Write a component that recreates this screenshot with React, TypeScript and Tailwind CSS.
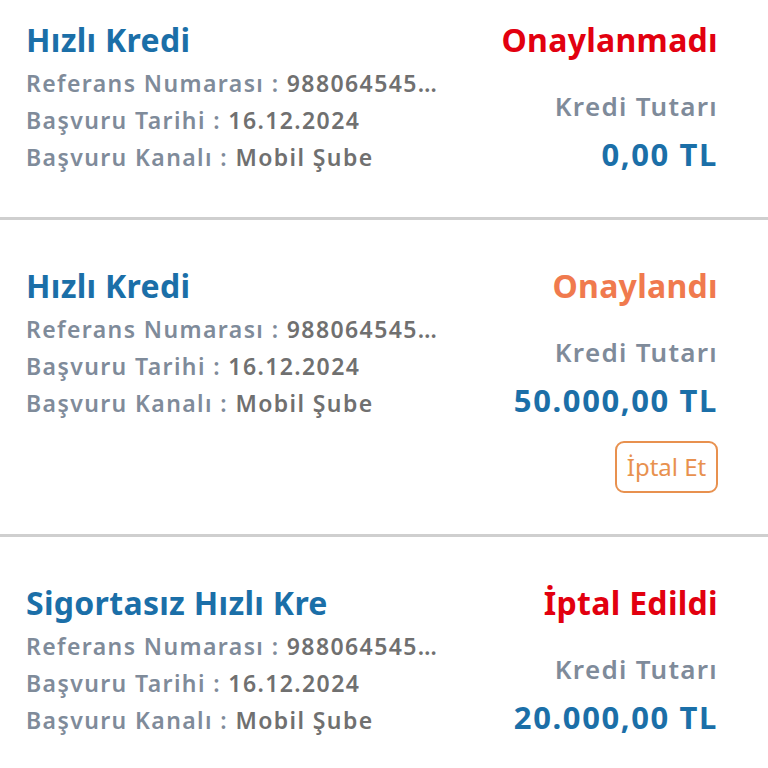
import React from "react";

type Item = {
  title: string;
  status: string;
  statusColor: string;
  amount: string;
  cancel?: boolean;
  first?: boolean;
};

const items: Item[] = [
  { title: "Hızlı Kredi", status: "Onaylanmadı", statusColor: "text-[#e2000f]", amount: "0,00 TL", first: true },
  { title: "Hızlı Kredi", status: "Onaylandı", statusColor: "text-[#f07a4e]", amount: "50.000,00 TL", cancel: true },
  { title: "Sigortasız Hızlı Kre", status: "İptal Edildi", statusColor: "text-[#e2000f]", amount: "20.000,00 TL" },
];

function Card({ item }: { item: Item }) {
  return (
    <div
      className={
        "flex justify-between pl-[26px] pr-[50px] pb-[41px] " +
        (item.first ? "pt-[22px]" : "pt-[48px]")
      }
    >
      <div className="flex flex-col">
        <div className="text-[32px] leading-[36px] font-bold tracking-[0.3px] text-[#1b6fa8] whitespace-nowrap">{item.title}</div>
        <div className="mt-[7px] flex flex-col text-[23px] leading-[37px] font-semibold tracking-[1.4px] whitespace-nowrap">
          <div>
            <span className="text-[#7f8b9a]">Referans Numarası : </span>
            <span className="text-[#707070]">988064545…</span>
          </div>
          <div>
            <span className="text-[#7f8b9a]">Başvuru Tarihi : </span>
            <span className="text-[#707070]">16.12.2024</span>
          </div>
          <div>
            <span className="text-[#7f8b9a]">Başvuru Kanalı : </span>
            <span className="text-[#707070]">Mobil Şube</span>
          </div>
        </div>
      </div>
      <div className="flex flex-col items-end">
        <div className={"text-[32px] leading-[36px] font-bold tracking-[0.3px] whitespace-nowrap " + item.statusColor}>{item.status}</div>
        <div className="mt-[32px] text-[26px] leading-[32px] font-semibold tracking-[1.3px] text-[#7f8b9a] whitespace-nowrap">Kredi Tutarı</div>
        <div className="mt-[14px] text-[31px] leading-[36px] font-bold tracking-[1.6px] text-[#1b6fa8] whitespace-nowrap">{item.amount}</div>
        {item.cancel && (
          <div className="mt-[23px] w-[103px] h-[52px] flex items-center justify-center border-2 border-[#e8914f] rounded-[9px] text-[24px] text-[#e8914f]">
            İptal Et
          </div>
        )}
      </div>
    </div>
  );
}

export default function App() {
  return (
    <div className="w-[768px] h-[768px] overflow-hidden bg-white" style={{ fontFamily: '"Noto Sans", sans-serif' }}>
      {items.map((it, i) => (
        <div key={i}>
          {i > 0 && <div className="h-[3px] bg-[#cfcfcf]" />}
          <Card item={it} />
        </div>
      ))}
    </div>
  );
}
